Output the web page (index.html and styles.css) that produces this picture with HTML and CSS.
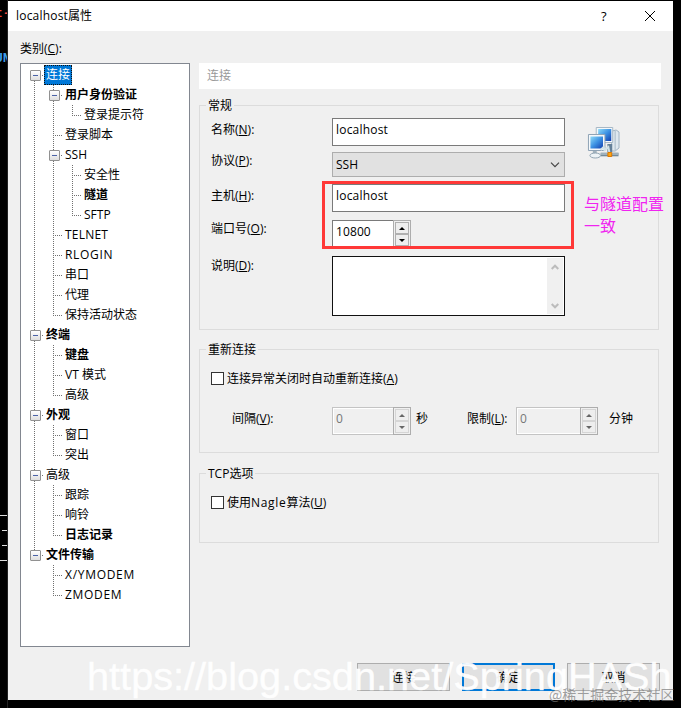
FILE: index.html
```html
<!DOCTYPE html>
<html lang="zh-CN">
<head>
<meta charset="utf-8">
<title>localhost属性</title>
<link rel="stylesheet" href="styles.css">
</head>
<body>
<div class="desktop">
  <aside class="terminal">
    <span class="term-red">t-</span>
    <span class="term-blue">UN</span>
    <i class="rule"></i><i class="rule short"></i><i class="rule short"></i><i class="rule"></i>
  </aside>
  <main class="dialog">
    <header class="titlebar">
      <span class="title"><span class="latin">localhost</span>属性</span>
      <span class="help">?</span>
      <svg class="close" width="12" height="12" viewBox="0 0 12 12"><path d="M1 1L11 11M11 1L1 11"/></svg>
    </header>
    <div class="body">
      <section class="sidebar">
        <div class="caption">类别(<u>C</u>):</div>
        <div class="tree">
          <div class="row"><i class="g down box"></i><span class="selected">连接</span></div>
          <div class="row"><i class="g v"></i><i class="g t box"></i><b>用户身份验证</b></div>
          <div class="row"><i class="g v"></i><i class="g v"></i><i class="g l"></i><span>登录提示符</span></div>
          <div class="row"><i class="g v"></i><i class="g t"></i><span>登录脚本</span></div>
          <div class="row"><i class="g v"></i><i class="g t box"></i><span>SSH</span></div>
          <div class="row"><i class="g v"></i><i class="g v"></i><i class="g t"></i><span>安全性</span></div>
          <div class="row"><i class="g v"></i><i class="g v"></i><i class="g t"></i><b>隧道</b></div>
          <div class="row"><i class="g v"></i><i class="g v"></i><i class="g l"></i><span>SFTP</span></div>
          <div class="row"><i class="g v"></i><i class="g t"></i><span class="latin">TELNET</span></div>
          <div class="row"><i class="g v"></i><i class="g t"></i><span class="caps">RLOGIN</span></div>
          <div class="row"><i class="g v"></i><i class="g t"></i><span>串口</span></div>
          <div class="row"><i class="g v"></i><i class="g t"></i><span>代理</span></div>
          <div class="row"><i class="g v"></i><i class="g l"></i><span>保持活动状态</span></div>
          <div class="row"><i class="g t box"></i><b>终端</b></div>
          <div class="row"><i class="g v"></i><i class="g t"></i><b>键盘</b></div>
          <div class="row"><i class="g v"></i><i class="g t"></i><span>VT 模式</span></div>
          <div class="row"><i class="g v"></i><i class="g l"></i><span>高级</span></div>
          <div class="row"><i class="g t box"></i><b>外观</b></div>
          <div class="row"><i class="g v"></i><i class="g t"></i><span>窗口</span></div>
          <div class="row"><i class="g v"></i><i class="g l"></i><span>突出</span></div>
          <div class="row"><i class="g t box"></i><span>高级</span></div>
          <div class="row"><i class="g v"></i><i class="g t"></i><span>跟踪</span></div>
          <div class="row"><i class="g v"></i><i class="g t"></i><span>响铃</span></div>
          <div class="row"><i class="g v"></i><i class="g l"></i><b>日志记录</b></div>
          <div class="row"><i class="g l box"></i><b>文件传输</b></div>
          <div class="row"><i class="g"></i><i class="g t"></i><span class="caps">X/YMODEM</span></div>
          <div class="row"><i class="g"></i><i class="g l"></i><span class="caps">ZMODEM</span></div>
        </div>
      </section>
      <section class="content">
        <h1 class="page-title">连接</h1>
        <div class="group general">
          <h2 class="legend">常规</h2>
          <div class="field name"><label>名称(<u>N</u>):</label><div class="input">localhost</div>
            <svg class="icon" width="33" height="34" viewBox="0 0 34 34" preserveAspectRatio="none">
              <defs><linearGradient id="screen" x1="0" y1="0" x2="1" y2="1"><stop offset="0" stop-color="#8fdcf8"/><stop offset=".5" stop-color="#3c91e3"/><stop offset="1" stop-color="#123fae"/></linearGradient></defs>
              <path d="M26 5l4-1 3 2v16l-4 3h-4z" fill="#dfe8ef" stroke="#9fb3c2"/>
              <path d="M29 5v19" stroke="#a9bac7"/>
              <path d="M21 18h5v8h-5z" fill="#638099"/>
              <path d="M14 28.500h18.500" stroke="#748a99" stroke-width="3.6"/><path d="M14 28h18" stroke="#cedbe3"/>
              <path d="M9.500 1.500h17v15h-17z" fill="#f4f8fb" stroke="#a7b7c4"/>
              <path d="M11.500 3h13.500v12h-13.500z" fill="url(#screen)"/>
              <path d="M1.500 8.500h17v16h-17z" fill="#f4f8fb" stroke="#8da2b4"/>
              <path d="M3.500 10.500h13v12h-13z" fill="url(#screen)"/>
              <path d="M8 25v3" stroke="#a3b3be" stroke-width="4"/>
              <ellipse cx="8.500" cy="29.500" rx="5.500" ry="2.500" fill="#edf3f6" stroke="#8fa3b1"/>
              <path d="M14 24l3-3 1 3 4-3 1 5" fill="none" stroke="#d1e2e7" stroke-width="2"/>
              <path d="M21.500 26.500h4v4h-4z" fill="#ffa60c" stroke="#d87708"/>
            </svg></div>
          <div class="field protocol"><label>协议(<u>P</u>):</label><div class="select">SSH<svg width="10" height="6" viewBox="0 0 10 6"><path d="M1 .7l4 4 4-4"/></svg></div></div>
          <div class="field host"><label>主机(<u>H</u>):</label><div class="input">localhost</div></div>
          <div class="field port"><label>端口号(<u>O</u>):</label><div class="spin"><span>10800</span><div class="arrows"><i></i><i></i></div></div></div>
          <div class="field note"><label>说明(<u>D</u>):</label><div class="textarea"><div class="scroll"><svg width="8" height="6" viewBox="0 0 8 6"><path d="M.7 5L4 1.700 7.300 5"/></svg><svg width="8" height="6" viewBox="0 0 8 6"><path d="M.7 1L4 4.300 7.300 1"/></svg></div></div></div>
          <div class="highlight"></div>
          <p class="annotation">与隧道配置一致</p>
        </div>
        <div class="group reconnect">
          <h2 class="legend">重新连接</h2>
          <div class="check"><i></i><span>连接异常关闭时自动重新连接(<u>A</u>)</span></div>
          <div class="limits">
            <label class="interval">间隔(<u>V</u>):</label>
            <div class="spin disabled"><span>0</span><div class="arrows"><i></i><i></i></div></div>
            <span class="seconds">秒</span>
            <label class="limit">限制(<u>L</u>):</label>
            <div class="spin disabled wide"><span>0</span><div class="arrows"><i></i><i></i></div></div>
            <span class="minutes">分钟</span>
          </div>
        </div>
        <div class="group tcp">
          <h2 class="legend">TCP选项</h2>
          <div class="check"><i></i><span>使用<span class="caps">Nagle</span>算法(<u>U</u>)</span></div>
        </div>
      </section>
    </div>
    <footer class="buttons"><div class="button">连接</div><div class="button primary">确定</div><div class="button">取消</div></footer>
  </main>
  <div class="site-mark">https://blog.csdn.net/SpringHASh</div>
  <div class="community-mark">@稀土掘金技术社区</div>
</div>
</body>
</html>
```
FILE: styles.css
```css
* { box-sizing: border-box; }
body { margin: 0; background: #000; font: 12px/20px "Open Sans", "Noto Sans CJK SC", sans-serif; color: #000; }
i { font-style: normal; }
u { text-underline-offset: 1px; text-decoration-skip-ink: none; }
.latin { letter-spacing: .2px; }
.caps { letter-spacing: .7px; }
.desktop { position: relative; display: flex; width: 681px; height: 708px; overflow: hidden; }
.terminal { display: flex; flex-direction: column; width: 8px; padding-top: 4px; overflow: hidden; border-right: 1px solid #222; font: 13px/20px "Liberation Mono", monospace; }
.term-red { margin-left: -5px; color: #f04438; font-weight: bold; }
.term-blue { margin: 25px 0 446px -5px; color: #3b9be8; font-weight: bold; }
.rule { flex: none; height: 1px; margin-bottom: 14px; background: #ddd; }
.rule.short { margin-left: 2px; }
.dialog { display: flex; flex-direction: column; width: 665px; height: 699px; margin-top: 1px; background: #f0f0f0; }
.titlebar { display: flex; align-items: center; height: 30px; padding: 0 17px 0 8px; background: #fff; }
.title { flex: 1; }
.help { width: 43px; font-size: 13px; font-weight: 500; }
.close { fill: none; stroke: #000; stroke-width: 1; }
.body { display: flex; gap: 9px; height: 632px; padding-left: 12px; }
.sidebar { width: 170px; padding-top: 8px; }
.caption { height: 24px; }
.tree { height: 584px; padding: 1px 0 0 4px; border: 1px solid #828790; background: #fff; }
.row { display: flex; height: 20px; white-space: nowrap; }
.row > span, .row > b { padding-left: 2px; line-height: 19px; }
.row > .selected { height: 20px; padding: 0 2px; background: #0078d7; color: #fff; outline: 1px dotted #111; outline-offset: -1px; }
.g { position: relative; flex: none; width: 19px; height: 20px; background-repeat: no-repeat; --v: repeating-linear-gradient(#707070 0 1px, transparent 1px 2px); --h: repeating-linear-gradient(90deg, #707070 0 1px, transparent 1px 2px); }
.g.v { background-image: var(--v); background-position: 9px 0; background-size: 1px 20px; }
.g.t { background-image: var(--v), var(--h); background-position: 9px 0, 9px 10px; background-size: 1px 20px, 9px 1px; }
.g.l { background-image: var(--v), var(--h); background-position: 9px 0, 9px 10px; background-size: 1px 11px, 9px 1px; }
.g.down { background-image: var(--v), var(--h); background-position: 9px 10px, 9px 10px; background-size: 1px 10px, 9px 1px; }
.box::before { content: ""; position: absolute; left: 5px; top: 6px; width: 9px; height: 9px; border: 1px solid #919191; border-radius: 1px; background: linear-gradient(#4b63a7, #4b63a7) center / 5px 1px no-repeat, linear-gradient(#fff, #dedede); }
.content { width: 462px; padding-top: 32px; }
.page-title { height: 26px; margin: 0 0 16px; padding-left: 8px; background: #fff; color: #999; font: inherit; line-height: 26px; }
.group { position: relative; width: 460px; border: 1px solid #dcdcdc; }
.legend { width: max-content; height: 20px; margin: -11px 0 0 6px; padding: 0 2px; background: #f0f0f0; font: inherit; line-height: 22px; }
.general { height: 225px; margin-bottom: 19px; }
.reconnect { height: 104px; margin-bottom: 20px; }
.tcp { height: 70px; }
.field { display: flex; align-items: flex-start; padding-left: 11px; }
.field label { width: 121px; line-height: 22px; }
.name { height: 34px; margin-top: 3px; }
.name label { line-height: 23px; }
.protocol { height: 32px; }
.protocol label { line-height: 18px; }
.host { height: 36px; }
.host label { line-height: 24px; }
.port { height: 36px; }
.port label { line-height: 18px; }
.note label { line-height: 19px; }
.input { width: 233px; height: 28px; padding-left: 3px; border: 1px solid #7a7a7a; background: #fff; line-height: 22px; letter-spacing: .2px; }
.select { display: flex; align-items: center; justify-content: space-between; width: 233px; height: 25px; padding: 0 4px 0 3px; border: 1px solid #adadad; background: #e1e1e1; }
.select svg, .scroll svg { fill: none; stroke: #444; stroke-width: 1.2; }
.textarea { display: flex; justify-content: flex-end; width: 233px; height: 60px; padding: 1px; border: 1px solid #111; background: #fff; }
.scroll { display: flex; flex-direction: column; justify-content: space-between; align-items: center; width: 16px; padding: 6px 0 5px; background: #f0f0f0; }
.scroll svg { stroke: #bcbcbc; stroke-width: 2; }
.spin { display: flex; justify-content: space-between; width: 79px; height: 28px; border: 1px solid #7a7a7a; background: #fff; }
.spin span { padding-left: 3px; line-height: 21px; letter-spacing: .1px; }
.arrows { width: 18px; height: 28px; margin: -1px -1px 0 0; padding: 1px; border: 1px solid #adadad; background: #f0f0f0; }
.arrows i { display: flex; align-items: center; justify-content: center; height: 12px; border: 1px solid #b0b0b0; background: #eee; }
.arrows i::before { content: ""; border: 3px solid transparent; border-top: 0; border-bottom: 3px solid #000; }
.arrows i:last-child::before { border-top: 3px solid #000; border-bottom: 0; }
.disabled { border-color: #c4c4c4; background: #f0f0f0; color: #777; box-shadow: inset 0 0 0 1px #fff; }
.disabled .arrows i { border-color: #d5d5d5; }
.disabled .arrows i::before { border-bottom-color: #666; }
.disabled .arrows i:last-child::before { border-top-color: #666; }
.wide { width: 82px; }
.icon { margin-left: 22px; margin-top: 8px; flex: none; }
.highlight { position: absolute; left: 122px; top: 75px; width: 252px; height: 68px; border: 3px solid #ff3837; }
.annotation { position: absolute; left: 384px; top: 87px; width: 82px; margin: 0; color: #f024f0; font-size: 16px; line-height: 22px; }
.check { display: flex; align-items: center; gap: 3px; height: 20px; margin: 9px 0 0 11px; }
.check > span { padding-top: 2px; }
.check i { width: 13px; height: 13px; border: 1px solid #333; background: #fff; }
.limits { display: flex; margin-top: 19px; padding-left: 32px; line-height: 23px; }
.interval { width: 100px; }
.seconds { width: 56px; padding-left: 5px; }
.limit { width: 49px; }
.minutes { padding-left: 11px; }
.buttons { display: flex; justify-content: flex-end; gap: 12px; padding-right: 13px; }
.button { width: 93px; height: 28px; border: 1px solid #adadad; background: #e1e1e1; text-align: center; line-height: 27px; }
.primary { border: 2px solid #0078d7; line-height: 25px; }
.box::before { top: 5px; }
.site-mark { position: absolute; left: 87px; top: 653px; color: rgba(255,255,255,.95); font: 39.7px/46px "Liberation Sans", sans-serif; white-space: nowrap; -webkit-text-stroke: .4px rgba(255,255,255,.9); }
.community-mark { position: absolute; left: 549px; top: 684px; color: rgba(120,120,120,.7); font: 14px/20px "Noto Sans CJK SC", sans-serif; white-space: nowrap; }
```
